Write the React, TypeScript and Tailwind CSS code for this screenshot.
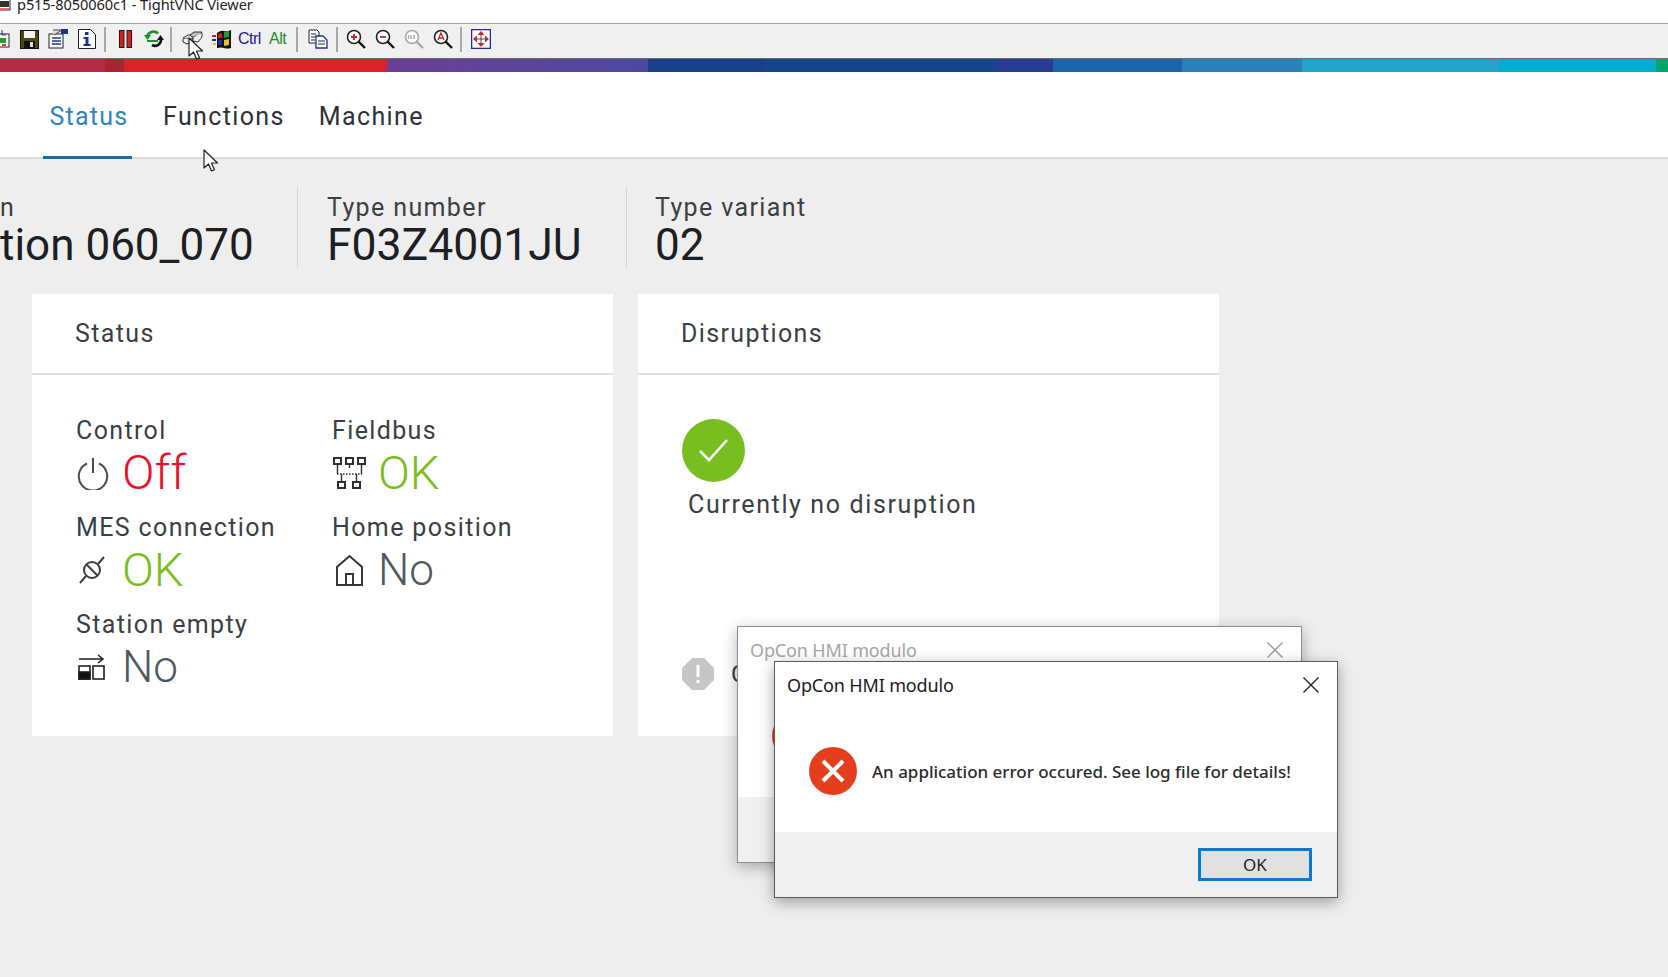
const barSegments = [
  { w: "w-[105px]", c: "bg-[#b12b45]" },
  { w: "w-[19px]", c: "bg-[#a92432]" },
  { w: "w-[263px]", c: "bg-[#dc2229]" },
  { w: "w-[261px]", c: "bg-gradient-to-r from-[#6a3f95] to-[#4b4a9e]" },
  { w: "w-[115px]", c: "bg-[#1a3f8a]" },
  { w: "w-[232px]", c: "bg-[#17458c]" },
  { w: "w-[58px]", c: "bg-[#283c91]" },
  { w: "w-[129px]", c: "bg-[#1c64a8]" },
  { w: "w-[120px]", c: "bg-[#2b80b5]" },
  { w: "w-[197px]", c: "bg-[#25a4c9]" },
  { w: "w-[157px]", c: "bg-[#00aed1]" },
  { w: "w-[12px]", c: "bg-[#00a76a]" },
];

function Sep({ className }: { className: string }) {
  return <div className={`h-[25px] w-[2px] bg-[#a8a8a8] ${className}`} />;
}

function Magnifier({ children, muted }: { children?: React.ReactNode; muted?: boolean }) {
  const ring = muted ? "#a8a8a8" : "#222";
  const handle = muted ? "#a8a8a8" : "#111";
  return (
    <svg width="20" height="20" viewBox="0 0 20 20" fill="none">
      <circle cx="8" cy="8" r="6.5" fill="#fff" stroke={ring} strokeWidth="1.6" />
      <path d="M12.5 12.5 L19 19" stroke={handle} strokeWidth="2.4" />
      {children}
    </svg>
  );
}

function Toolbar() {
  return (
    <div className="flex h-[35px] items-center bg-[#f0f0f0] border-b border-[#6b6b6b] pb-[4px]">
      <svg className="ml-0 shrink-0" width="11" height="20" viewBox="0 0 11 20" fill="none">
        <rect x="-6" y="5" width="15" height="13" fill="#fff" stroke="#222" />
        <rect x="0" y="9" width="6" height="5" fill="#1fa12c" />
        <rect x="2" y="15" width="4" height="2" fill="#e33" />
        <path d="M2 1v5h4" stroke="#123a9c" />
      </svg>
      <svg className="ml-[9px] shrink-0" width="19" height="19" viewBox="0 0 19 19">
        <rect width="18" height="18" x="0.5" y="0.5" fill="#4c4a10" stroke="#111" />
        <rect x="4" y="1" width="11" height="7" fill="#f4f4f4" />
        <rect x="4" y="11" width="11" height="7" fill="#111" />
        <rect x="10" y="12" width="3" height="5" fill="#ddd" />
      </svg>
      <svg className="ml-[9px] shrink-0" width="20" height="20" viewBox="0 0 20 20" fill="none">
        <rect x="1" y="5" width="14" height="14" fill="#fff" stroke="#222" />
        <path d="M5 1h9l-8 5" stroke="#444" fill="#ddd" />
        <rect x="13" y="0" width="7" height="5" fill="#1c2f9c" />
        <path d="M4 9h9M4 12h9M4 15h9" stroke="#1b3a9c" strokeWidth="1.4" />
      </svg>
      <svg className="ml-[10px] shrink-0" width="18" height="20" viewBox="0 0 18 20" fill="none">
        <path d="M0.5 0.5h12l5 5v14H0.5z" fill="#fff" stroke="#222" />
        <rect x="7" y="3" width="3.5" height="3" fill="#1c2f9c" />
        <path d="M5.5 8h5v7h2v2h-7v-2h2v-5h-2z" fill="#1c2f9c" />
      </svg>
      <Sep className="ml-[8px]" />
      <svg className="ml-[13px] shrink-0" width="13" height="18" viewBox="0 0 13 18">
        <rect x="0.5" y="0.5" width="4.5" height="17" fill="#d71f1f" stroke="#1a1a1a" />
        <rect x="8" y="0.5" width="4.5" height="17" fill="#d71f1f" stroke="#1a1a1a" />
      </svg>
      <svg className="ml-[12px] shrink-0" width="20" height="18" viewBox="0 0 20 18" fill="none">
        <path d="M3 7a6.5 6.5 0 0 1 11-3.5" stroke="#1d8f27" strokeWidth="2.6" />
        <path d="M0 5h7l-3.5 5z" fill="#1d8f27" />
        <path d="M3 11h11" stroke="#1d8f27" strokeWidth="2" />
        <path d="M17 10a6 6 0 0 1-9 5" stroke="#111" strokeWidth="2.6" />
        <path d="M13 10h7l-3.5-5z" fill="#111" />
      </svg>
      <Sep className="ml-[6px]" />
      <svg className="ml-[10px] shrink-0" width="21" height="17" viewBox="0 0 21 17" fill="none">
        <path d="M1 7l5-3h6l-2 4H3z" fill="#ddd" stroke="#333" />
        <path d="M8 4l4-3h8l-3 5h-7z" fill="#bbb" stroke="#333" />
        <path d="M1 8v3l4 2 5-3V8M11 7v3l5 1 4-5V2" fill="#eee" stroke="#333" />
      </svg>
      <svg className="ml-[9px] shrink-0" width="20" height="20" viewBox="0 0 20 20">
        <path d="M5 4q4-3 7-2t7-1v18q-4 1-7 0t-7 0z" fill="#111" />
        <path d="M0 6h4v2H0z" fill="#d01f1f" />
        <path d="M0 10h4v2H0z" fill="#1c2fa0" />
        <path d="M1 14h3v2H1z" fill="#e8c51a" />
        <path d="M6 5l4-1v5H6z" fill="#d01f1f" />
        <path d="M12 3l5-1v6l-5 1z" fill="#1f9f2a" />
        <path d="M6 11h4v5H6z" fill="#1c2fa0" />
        <path d="M12 11l5-1v6l-5 1z" fill="#e8c51a" />
      </svg>
      <span className="ml-[6px] w-[31px] text-[16px] text-[#1c1c96] [font-family:'Liberation_Sans',sans-serif] tracking-[-0.5px]">Ctrl</span>
      <span className="w-[26px] text-[16px] text-[#1f8f1f] [font-family:'Liberation_Sans',sans-serif] tracking-[-0.5px]">Alt</span>
      <Sep className="ml-[1px]" />
      <svg className="ml-[10px] shrink-0" width="20" height="20" viewBox="0 0 20 20" fill="none">
        <path d="M1 1h8l2 2v11H1z" fill="#fff" stroke="#222" />
        <path d="M3 5h5M3 8h5M3 11h4" stroke="#222" />
        <path d="M8 7h7l4 4v8H8z" fill="#fff" stroke="#1c2f9c" strokeWidth="1.3" />
        <path d="M10 12h7M10 15h7" stroke="#222" />
      </svg>
      <Sep className="ml-[8px]" />
      <div className="ml-[8px] shrink-0">
        <Magnifier>
          <path d="M5 8h6M8 5v6" stroke="#c8242a" strokeWidth="1.8" />
        </Magnifier>
      </div>
      <div className="ml-[9px] shrink-0">
        <Magnifier>
          <path d="M5 8h6" stroke="#c8242a" strokeWidth="1.8" />
        </Magnifier>
      </div>
      <div className="ml-[9px] shrink-0">
        <Magnifier muted>
          <path d="M4.5 6v4M7 6v4M10 6v4" stroke="#a8a8a8" strokeWidth="1.4" />
        </Magnifier>
      </div>
      <div className="ml-[9px] shrink-0">
        <Magnifier>
          <path d="M5 11l3-7 3 7M6 9h4" stroke="#c8242a" strokeWidth="1.3" />
        </Magnifier>
      </div>
      <Sep className="ml-[7px]" />
      <svg className="ml-[9px] shrink-0" width="20" height="20" viewBox="0 0 20 20" fill="none">
        <rect x="0.5" y="0.5" width="19" height="19" fill="#fff" stroke="#1c2f9c" strokeWidth="1.6" />
        <path d="M10 2l3.5 4h-7zM10 18l3.5-4h-7zM2 10l4-3.5v7zM18 10l-4-3.5v7z" fill="#c8242a" />
        <path d="M10 6v8M6 10h8" stroke="#222" strokeWidth="0.8" />
      </svg>
    </div>
  );
}

function Label({ children, wide }: { children: React.ReactNode; wide?: boolean }) {
  return (
    <div className={`text-[25px] leading-[28px] text-[#3a3f44] ${wide ? "tracking-[0.065em]" : "tracking-[0.055em]"}`}>
      {children}
    </div>
  );
}

function StatusItem({
  label,
  value,
  color,
  icon,
}: {
  label: string;
  value: string;
  color: string;
  icon: React.ReactNode;
}) {
  return (
    <div className="h-[97px]">
      <Label>{label}</Label>
      <div className="mt-[2px] flex h-[52px] items-center">
        <div className="flex w-[46px] shrink-0">{icon}</div>
        <span className={`leading-[52px] font-light ${color}`}>{value}</span>
      </div>
    </div>
  );
}

function Dialog({ className, muted }: { className: string; muted?: boolean }) {
  return (
    <div className={`absolute flex flex-col bg-white border ${className}`}>
      <div className="flex h-[44px] shrink-0 items-center justify-between pl-[12px] pr-[17px] pt-[2px]">
        <span className={`text-[18px] [font-family:'Noto_Sans',sans-serif] tracking-[-0.15px] ${muted ? "text-[#a6a6a6]" : "text-[#1a1a1a]"}`}>
          OpCon HMI modulo
        </span>
        <svg width="18" height="18" viewBox="0 0 18 18" fill="none">
          <path d="M1.5 1.5l15 15M16.5 1.5l-15 15" stroke={muted ? "#9a9a9a" : "#222"} strokeWidth="1.4" />
        </svg>
      </div>
      <div className="flex flex-1 items-center pl-[34px]">
        <svg className="mt-[4px] shrink-0" width="48" height="48" viewBox="0 0 48 48" fill="none">
          <circle cx="24" cy="24" r="24" fill="#e53e1c" />
          <path d="M14 14l20 20M34 14L14 34" stroke="#fff" strokeWidth="4" />
        </svg>
        <span className="ml-[15px] mt-[5px] whitespace-nowrap text-[17px] font-medium text-[#2b2b2b] [font-family:'Noto_Sans',sans-serif] tracking-[-0.02px]">
          An application error occured. See log file for details!
        </span>
      </div>
      <div className="flex h-[65px] shrink-0 items-center justify-end bg-[#f0f0f0] pr-[25px]">
        <div className="flex h-[33px] w-[114px] items-center justify-center border-[3px] border-[#0a78d4] bg-[#e1e1e1] text-[17px] text-[#222] [font-family:'Noto_Sans',sans-serif]">
          OK
        </div>
      </div>
    </div>
  );
}

function Pointer({ className }: { className: string }) {
  return (
    <svg className={`absolute ${className}`} width="16" height="24" viewBox="0 0 16 24" fill="none">
      <path d="M1 1v18l4.5-4 3 7 3-1.3-3-6.7h6z" fill="#fff" stroke="#222" strokeWidth="1.2" strokeLinejoin="round" />
    </svg>
  );
}

export default function App() {
  return (
    <div className="relative flex h-[977px] w-[1668px] flex-col overflow-hidden bg-[#eeeeee] [font-family:Roboto,sans-serif]">
      {/* VNC title bar, cut off at the top of the capture */}
      <div className="flex h-[24px] shrink-0 items-start overflow-hidden border-b border-[#a3a3a3] bg-white">
        <svg className="shrink-0" width="11" height="12" viewBox="0 0 11 12">
          <rect x="-2" y="-3" width="12" height="13" fill="#fff" stroke="#222" />
          <rect x="0" y="1" width="9" height="6" fill="#333" />
          <rect x="0" y="8" width="9" height="2" fill="#e66" />
        </svg>
        <span className="ml-[6px] mt-[-6px] whitespace-nowrap text-[14.6px] leading-[20px] text-[#222] [font-family:'Noto_Sans',sans-serif] tracking-[-0.1px]">
          p515-8050060c1 - TightVNC Viewer
        </span>
      </div>
      <Toolbar />

      <div className="flex h-[13px] shrink-0">
        {barSegments.map((s, i) => (
          <div key={i} className={`h-full shrink-0 ${s.w} ${s.c}`} />
        ))}
      </div>

      {/* tabs */}
      <nav className="flex h-[87px] shrink-0 items-stretch gap-[20px] border-b-2 border-[#dcdcdc] bg-white pl-[43px]">
        <div className="mr-[4px] flex h-[87px] w-[89px] items-center justify-center border-b-[3px] border-[#1a6ba8] pl-[3px] pt-[5px] text-[25px] tracking-[0.05em] text-[#2f84bf]">
          Status
        </div>
        <div className="flex items-center px-[7px] pt-[4px] text-[25px] tracking-[0.055em] text-[#2c3238]">Functions</div>
        <div className="flex items-center px-[7px] pt-[4px] text-[25px] tracking-[0.055em] text-[#2c3238]">Machine</div>
      </nav>

      {/* header values */}
      <div className="mt-[28px] flex h-[81px] shrink-0 text-[#1c2024]">
        <div className="w-[298px] shrink-0 border-r border-[#d4d4d4] pt-[7px]">
          <Label>n</Label>
          <div className="text-[44px] leading-[46px] whitespace-nowrap">tion 060_070</div>
        </div>
        <div className="w-[329px] shrink-0 border-r border-[#d4d4d4] pl-[29px] pt-[7px]">
          <Label>Type number</Label>
          <div className="text-[44.5px] leading-[46px]">F03Z4001JU</div>
        </div>
        <div className="pl-[28px] pt-[7px]">
          <Label>Type variant</Label>
          <div className="text-[44px] leading-[46px]">02</div>
        </div>
      </div>

      {/* cards */}
      <div className="mt-[26px] flex gap-[25px] pl-[32px]">
        <section className="h-[442px] w-[581px] bg-white">
          <div className="flex h-[81px] items-center border-b-2 border-[#dedede] pl-[43px]">
            <Label>Status</Label>
          </div>
          <div className="grid grid-cols-[256px_1fr] pl-[44px] pt-[42px]">
            <StatusItem
              label="Control"
              value="Off"
              color="text-[48px] text-[#e8112d]"
              icon={
                <svg className="ml-[1px]" width="32" height="33" viewBox="0 0 32 33" fill="none">
                  <path d="M10 6.5a14.2 14.2 0 1 0 12 0M16 1v15" stroke="#4a4f54" strokeWidth="2" />
                </svg>
              }
            />
            <StatusItem
              label="Fieldbus"
              value="OK"
              color="text-[47px] text-[#78be20]"
              icon={
                <svg className="ml-[1px]" width="33" height="33" viewBox="0 0 33 33" fill="none" stroke="#2c3036" strokeWidth="2">
                  <rect x="1" y="1" width="7" height="6" />
                  <rect x="13" y="1" width="7" height="6" />
                  <rect x="25" y="1" width="7" height="6" />
                  <rect x="5" y="25" width="7" height="6" />
                  <rect x="20" y="25" width="7" height="6" />
                  <path d="M4.5 7v10M16.5 7v4M28.5 7v10M8.5 17v8M23.5 17v8" strokeWidth="1.4" />
                  <path d="M4 17h25" strokeWidth="1.4" strokeDasharray="1.5 1.5" />
                </svg>
              }
            />
            <StatusItem
              label="MES connection"
              value="OK"
              color="text-[47px] text-[#78be20]"
              icon={
                <svg className="ml-[2px]" width="28" height="30" viewBox="0 0 28 30" fill="none" stroke="#3a3f44" strokeWidth="2">
                  <circle cx="14" cy="15" r="8" />
                  <path d="M2 28l6-7M20 9l6-7M8.5 9.5l11 11" />
                </svg>
              }
            />
            <StatusItem
              label="Home position"
              value="No"
              color="text-[44px] text-[#4f5962]"
              icon={
                <svg className="ml-[3px]" width="29" height="32" viewBox="0 0 29 32" fill="none" stroke="#33373b" strokeWidth="2">
                  <path d="M2 31V13L14.5 2 27 13v18zM11 31V20h7v11" />
                </svg>
              }
            />
            <StatusItem
              label="Station empty"
              value="No"
              color="text-[44px] text-[#4f5962]"
              icon={
                <svg className="ml-[2px]" width="27" height="26" viewBox="0 0 27 26" fill="none" stroke="#222" strokeWidth="1.6">
                  <path d="M1 5h24M20 1l5 4-5 4" />
                  <rect x="1" y="12" width="11" height="13" />
                  <rect x="1" y="18" width="11" height="7" fill="#111" />
                  <rect x="15" y="12" width="11" height="13" />
                </svg>
              }
            />
          </div>
        </section>

        <section className="h-[442px] w-[581px] bg-white">
          <div className="flex h-[81px] items-center border-b-2 border-[#dedede] pl-[43px]">
            <Label>Disruptions</Label>
          </div>
          <div className="pl-[44px] pt-[44px]">
            <svg width="63" height="63" viewBox="0 0 63 63" fill="none">
              <circle cx="31.5" cy="31.5" r="31.5" fill="#78be20" />
              <path d="M18 32l9 9 18-20" stroke="#fff" strokeWidth="2.6" />
            </svg>
            <div className="ml-[6px] mt-[9px]">
              <Label wide>Currently no disruption</Label>
            </div>
            <div className="mt-[137px] flex items-center">
              <svg width="32" height="32" viewBox="0 0 32 32">
                <path d="M10 0h12l10 10v12L22 32H10L0 22V10z" fill="#c4c6c8" />
                <rect x="14.5" y="7" width="3" height="12" fill="#fff" />
                <rect x="14.5" y="22" width="3" height="3" fill="#fff" />
              </svg>
              <span className="ml-[17px] text-[24px] text-[#3a3f44]">C</span>
            </div>
          </div>
        </section>
      </div>

      <Dialog muted className="left-[737px] top-[626px] h-[237px] w-[565px] border-[#8e8e8e] shadow-[0_4px_14px_rgba(0,0,0,0.3)]" />
      <Dialog className="left-[774px] top-[661px] h-[237px] w-[564px] border-[#5a5a5a] shadow-[0_4px_14px_rgba(0,0,0,0.35)]" />

      <Pointer className="left-[188px] top-[37px]" />
      <Pointer className="left-[203px] top-[149px]" />
    </div>
  );
}
